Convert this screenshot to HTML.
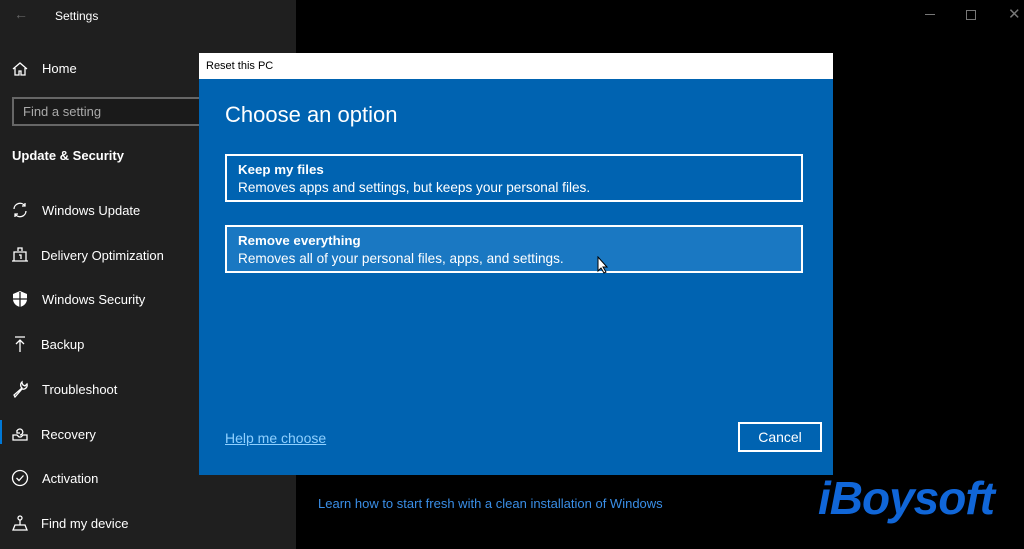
<!DOCTYPE html>
<html><head><meta charset="utf-8"><style>
*{margin:0;padding:0;box-sizing:border-box}
body{width:1024px;height:549px;overflow:hidden;background:#000;font-family:"Liberation Sans",sans-serif;position:relative;color:#fff}
.side{position:absolute;left:0;top:0;width:296px;height:549px;background:#1f1f1f}
.t{position:absolute;font-size:13px;color:#fff;white-space:nowrap}
.ic{position:absolute;left:11px;width:18px;height:18px}
.dlg{position:absolute;left:199px;top:53px;width:634px;height:422px;background:#0063b1}
.bar{position:absolute;left:0;top:0;width:634px;height:26px;background:#fff;color:#000;font-size:11px;padding:7px 0 0 7px}
.opt{position:absolute;left:26px;width:578px;height:48px;border:2px solid #fff;padding:6px 0 0 11px}
.opt b{display:block;font-size:13.3px;margin-bottom:2px}
.opt span{font-size:13.6px}
</style></head><body>
<div class="side">
<div class="t" style="left:14px;top:6px;color:#666;font-size:14px">←</div>
<div class="t" style="left:55px;top:9px;font-size:12px">Settings</div>
<svg class="ic" style="top:60px" viewBox="0 0 18 18" fill="none" stroke="#fff" stroke-width="1.3"><path d="M2 9L9 3l7 6M4 8v7h4v-4h2v4h4V8"/></svg>
<div class="t" style="left:42px;top:61px">Home</div>
<div style="position:absolute;left:12px;top:97px;width:200px;height:29px;border:2px solid #666;background:#1a1a1a"></div>
<div class="t" style="left:23px;top:104px;color:#aaa">Find a setting</div>
<div class="t" style="left:12px;top:148px;font-weight:bold">Update &amp; Security</div>
<svg class="ic" style="top:201px" viewBox="0 0 18 18" fill="none" stroke="#fff" stroke-width="1.3"><path d="M3 8a6 6 0 0 1 11-3M15 10a6 6 0 0 1-11 3M14 2v3h-3M4 16v-3h3"/></svg>
<div class="t" style="left:42px;top:203px">Windows Update</div>
<svg class="ic" style="top:246px" viewBox="0 0 18 18" fill="none" stroke="#fff" stroke-width="1.3"><path d="M1 15h16M3 15V6h12v9M7 5V2h4v3M8 9h2v4"/></svg>
<div class="t" style="left:41px;top:248px">Delivery Optimization</div>
<svg class="ic" style="top:290px" viewBox="0 0 18 18"><path d="M9 1L2 4v5c0 4 3 7 7 8 4-1 7-4 7-8V4z" fill="#fff"/><path d="M9 2v15M2 9h14" stroke="#1f1f1f" stroke-width="1.3"/></svg>
<div class="t" style="left:42px;top:292px">Windows Security</div>
<svg class="ic" style="top:335px" viewBox="0 0 18 18" fill="none" stroke="#fff" stroke-width="1.3"><path d="M4 2h10M9 17V5M5 9l4-4 4 4"/></svg>
<div class="t" style="left:41px;top:337px">Backup</div>
<svg class="ic" style="top:380px" viewBox="0 0 18 18" fill="none" stroke="#fff" stroke-width="1.3"><path d="M11 2a4 4 0 0 0 0 6L3 15l1 2 7-8a4 4 0 0 0 5-5l-2 2-2-1-1-2z"/></svg>
<div class="t" style="left:42px;top:382px">Troubleshoot</div>
<div style="position:absolute;left:0;top:420px;width:2px;height:24px;background:#0078d7"></div>
<svg class="ic" style="top:425px" viewBox="0 0 18 18" fill="none" stroke="#fff" stroke-width="1.3"><path d="M2 10h4l2 2h2l2-2h4v5H2zM6 8a3 3 0 1 1 3 2M6 5v3h3"/></svg>
<div class="t" style="left:41px;top:427px">Recovery</div>
<svg class="ic" style="top:469px" viewBox="0 0 18 18" fill="none" stroke="#fff" stroke-width="1.3"><circle cx="9" cy="9" r="7.5"/><path d="M5.5 9l2.5 2.5 4.5-5"/></svg>
<div class="t" style="left:42px;top:471px">Activation</div>
<svg class="ic" style="top:514px" viewBox="0 0 18 18" fill="none" stroke="#fff" stroke-width="1.3"><circle cx="9" cy="4" r="2"/><path d="M9 6v5M4 11h10l2 5H2z"/></svg>
<div class="t" style="left:41px;top:516px">Find my device</div>
</div>
<div style="position:absolute;left:925px;top:14px;width:10px;height:1px;background:#777"></div>
<div style="position:absolute;left:966px;top:10px;width:10px;height:10px;border:1px solid #777"></div>
<div class="t" style="left:1008px;top:5px;color:#777;font-size:15px">✕</div>
<div class="dlg">
<div class="bar">Reset this PC</div>
<div style="position:absolute;left:26px;top:49px;font-size:22px;color:#fff">Choose an option</div>
<div class="opt" style="top:101px"><b>Keep my files</b><span>Removes apps and settings, but keeps your personal files.</span></div>
<div class="opt" style="top:172px;background:#1a78c2"><b>Remove everything</b><span>Removes all of your personal files, apps, and settings.</span></div>
<svg style="position:absolute;left:398px;top:203px" width="12" height="18" viewBox="0 0 12 18"><path d="M1 1v14l3-3 3 5 2-1-3-5h4z" fill="#fff" stroke="#000" stroke-width="1"/></svg>
<div class="t" style="left:26px;top:377px;color:#8fd0ff;text-decoration:underline;font-size:14px">Help me choose</div>
<div style="position:absolute;left:539px;top:369px;width:84px;height:30px;border:2px solid #fff;font-size:14px;text-align:center;line-height:26px">Cancel</div>
</div>
<div class="t" style="left:318px;top:496px;color:#3a8ee6">Learn how to start fresh with a clean installation of Windows</div>
<div class="t" style="left:818px;top:471px;font-size:46px;font-weight:900;font-style:italic;color:#1066d8;letter-spacing:-1px">iBoysoft</div>
</body></html>
